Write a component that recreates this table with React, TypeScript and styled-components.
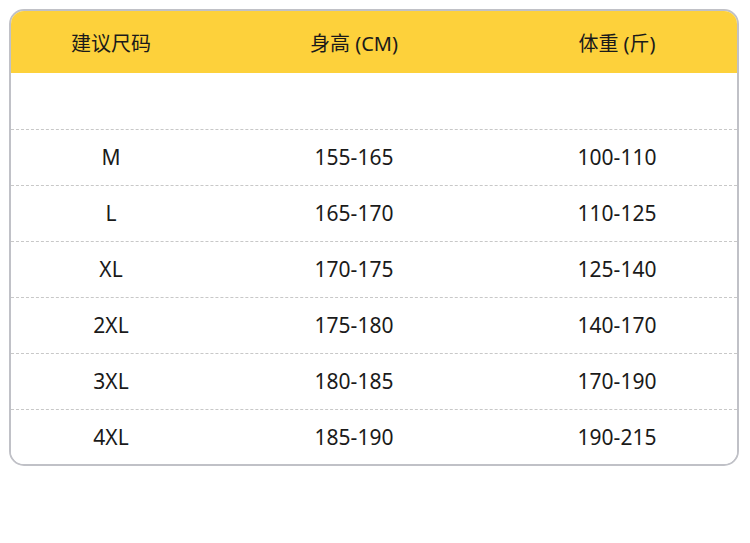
import React from "react";
import styled, { createGlobalStyle } from "styled-components";

const Global = createGlobalStyle`
  html, body { margin: 0; padding: 0; background: #fff; }
  body { font-family: "Noto Sans", "Noto Sans CJK SC", sans-serif; }
`;

const Page = styled.div`
  width: 750px;
  height: 543px;
  padding: 9px 0 0 9px;
  box-sizing: border-box;
`;

const Card = styled.div`
  width: 730px;
  box-sizing: border-box;
  border: 2px solid #c0c1c7;
  border-radius: 15px;
  overflow: hidden;
  background: #fff;
`;

const Row = styled.div<{ $header?: boolean; $last?: boolean; $height: number }>`
  display: grid;
  grid-template-columns: 200px 286px 1fr;
  align-items: center;
  height: ${(p) => p.$height}px;
  background: ${(p) => (p.$header ? "#fdd13b" : "#fff")};
  border-bottom: ${(p) => (p.$header || p.$last ? "none" : "1px dashed #c8c8c8")};
  box-sizing: border-box;
`;

const Cell = styled.div<{ $header?: boolean }>`
  text-align: center;
  font-family: "Noto Sans", "Noto Sans CJK SC", sans-serif;
  font-size: ${(p) => (p.$header ? "20px" : "21px")};
  color: #1a1a1a;
  line-height: 1;
  padding-top: ${(p) => (p.$header ? "3px" : "0")};
`;

const rows = [
  ["M", "155-165", "100-110"],
  ["L", "165-170", "110-125"],
  ["XL", "170-175", "125-140"],
  ["2XL", "175-180", "140-170"],
  ["3XL", "180-185", "170-190"],
  ["4XL", "185-190", "190-215"],
];

export default function App() {
  return (
    <>
      <Global />
      <Page>
        <Card>
          <Row $header $height={62}>
            <Cell $header>建议尺码</Cell>
            <Cell $header>身高 (CM)</Cell>
            <Cell $header>体重 (斤)</Cell>
          </Row>
          <Row $height={57}>
            <Cell />
            <Cell />
            <Cell />
          </Row>
          {rows.map((r, i) => (
            <Row key={r[0]} $height={i === rows.length - 1 ? 54 : 56} $last={i === rows.length - 1}>
              {r.map((c, j) => (
                <Cell key={j}>{c}</Cell>
              ))}
            </Row>
          ))}
        </Card>
      </Page>
    </>
  );
}
